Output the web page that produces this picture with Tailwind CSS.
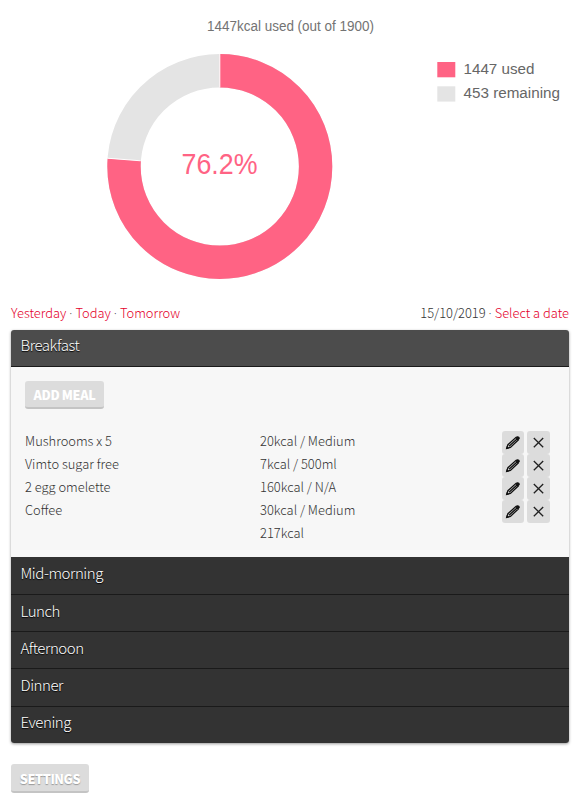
<!DOCTYPE html>
<html lang="en">
<head>
<meta charset="utf-8">
<title>Food diary</title>
<script src="https://cdn.jsdelivr.net/npm/@tailwindcss/browser@4"></script>
</head>
<body class="bg-white">
<svg width="0" height="0" class="absolute">
  <symbol id="pencil" viewBox="0 0 16 16"><path d="M1.7 13.4L2.9 9.7L10.8 2.6L13.3 5.1L5.4 12.4Z M4 11.2L12 3.9" fill="none" stroke="#111" stroke-width="1.3"/><path d="M10.6 2.2L11.9 1.3Q13 .8 14.1 1.8T14.6 4L13.4 5.1ZM1 14.2L1.8 11L4.2 13.2Z" fill="#111"/></symbol>
  <symbol id="cross" viewBox="0 0 16 16"><path d="M2.8 3L12.2 12.2M12.2 3L2.8 12.2" fill="none" stroke="#222" stroke-width="1.3"/></symbol>
</svg>
<main class="h-[803px] w-[585px] overflow-hidden pr-4 pl-[11px] font-['Noto_Sans_CJK_SC','Open_Sans',sans-serif] text-[12.9px] font-light text-[#333]">
  <svg class="-ml-[11px] block h-[300px] w-[585px]" viewBox="0 0 585 300" font-family="Liberation Sans, Arial, sans-serif" font-weight="400">
    <text x="207" y="31" font-size="14" textLength="167" lengthAdjust="spacingAndGlyphs" fill="#737373">1447kcal used (out of 1900)</text>
    <circle cx="219.8" cy="166.5" r="95.8" fill="none" stroke="#e4e4e4" stroke-width="33.4"/>
    <circle cx="219.8" cy="166.5" r="95.8" fill="none" stroke="#ff6384" stroke-width="33.4" pathLength="1900" stroke-dasharray="1447 453" transform="rotate(-90 219.8 166.5)"/>
    <path d="M219.8 54V87.5M107.3 158.2L140.8 160.8" stroke="#fff" stroke-width="1"/>
    <text x="181.5" y="174" font-size="29" textLength="76" lengthAdjust="spacingAndGlyphs" fill="#ff6384">76.2%</text>
    <rect x="437.3" y="62" width="18" height="15.3" fill="#ff6384"/>
    <rect x="437.3" y="86.3" width="18" height="15.3" fill="#e4e4e4"/>
    <text x="463.5" y="74" font-size="15.2" textLength="71" lengthAdjust="spacingAndGlyphs" fill="#666">1447 used</text>
    <text x="463.5" y="98" font-size="15.2" textLength="96.5" lengthAdjust="spacingAndGlyphs" fill="#666">453 remaining</text>
  </svg>
  <nav class="flex h-[30px] justify-between pt-0.5 leading-[22px]">
    <div class="flex h-[22px]"><a class="text-[#e4002b]">Yesterday</a><span class="w-[9px] text-center font-['Open_Sans']">·</span><a class="text-[#e4002b]">Today</a><span class="w-[9px] text-center font-['Open_Sans']">·</span><a class="text-[#e4002b]">Tomorrow</a></div>
    <div class="flex h-[22px]"><span>15/10/2019</span><span class="w-[9px] text-center font-['Open_Sans']">·</span><a class="text-[#e4002b]">Select a date</a></div>
  </nav>
  <section class="h-[413px] overflow-hidden rounded-[3px] bg-[#f7f7f7] shadow-[0_1px_3px_#00000066]">
    <h2 class="h-[37px] border-b border-[#1a1a1a] bg-[#4c4c4c] pl-[9.5px] text-[15px] leading-[30px] tracking-[-0.45px] text-white [text-shadow:0_1px_1px_#000]">Breakfast</h2>
    <div class="h-[190px] px-3.5 pt-3.5">
      <button class="block h-7 w-[79px] rounded-[3px] border-b-2 border-[#c4c4c4] bg-[#dcdcdc] pt-0.5 text-[12.7px] leading-[24px] font-black tracking-[-0.35px] text-white">ADD MEAL</button>
      <div class="mt-[21px] grid grid-cols-[235px_242px_22px_26px] auto-rows-[23px] leading-[22px]">
        <span>Mushrooms x 5</span><span>20kcal / Medium</span><span class="relative top-px flex items-center justify-center rounded-[3px] bg-[#dcdcdc]"><svg class="size-4"><use href="#pencil"/></svg></span><span class="relative top-px ml-[3px] flex items-center justify-center rounded-[3px] bg-[#dcdcdc]"><svg class="size-4"><use href="#cross"/></svg></span>
        <span>Vimto sugar free</span><span>7kcal / 500ml</span><span class="relative top-px flex items-center justify-center rounded-[3px] bg-[#dcdcdc]"><svg class="size-4"><use href="#pencil"/></svg></span><span class="relative top-px ml-[3px] flex items-center justify-center rounded-[3px] bg-[#dcdcdc]"><svg class="size-4"><use href="#cross"/></svg></span>
        <span>2 egg omelette</span><span>160kcal / N/A</span><span class="relative top-px flex items-center justify-center rounded-[3px] bg-[#dcdcdc]"><svg class="size-4"><use href="#pencil"/></svg></span><span class="relative top-px ml-[3px] flex items-center justify-center rounded-[3px] bg-[#dcdcdc]"><svg class="size-4"><use href="#cross"/></svg></span>
        <span>Coffee</span><span>30kcal / Medium</span><span class="relative top-px flex items-center justify-center rounded-[3px] bg-[#dcdcdc]"><svg class="size-4"><use href="#pencil"/></svg></span><span class="relative top-px ml-[3px] flex items-center justify-center rounded-[3px] bg-[#dcdcdc]"><svg class="size-4"><use href="#cross"/></svg></span>
        <span></span><span>217kcal</span>
      </div>
    </div>
    <div class="bg-[#333] text-[15px] leading-[31px] tracking-[-0.45px] text-white [text-shadow:0_1px_1px_#000]">
      <h2 class="h-[38px] border-b border-[#1a1a1a] pl-[9.5px]">Mid-morning</h2>
      <h2 class="h-[37px] border-b border-[#1a1a1a] pl-[9.5px]">Lunch</h2>
      <h2 class="h-[37px] border-b border-[#1a1a1a] pl-[9.5px]">Afternoon</h2>
      <h2 class="h-[38px] border-b border-[#1a1a1a] pl-[9.5px]">Dinner</h2>
      <h2 class="h-9 pl-[9.5px] leading-[30px]">Evening</h2>
    </div>
  </section>
  <button class="mt-[21px] block h-[29px] w-[78px] rounded-[3px] border-b-2 border-[#c4c4c4] bg-[#dcdcdc] pt-0.5 text-[12.7px] leading-[24px] font-black tracking-[-0.45px] text-white [text-shadow:0_1px_1px_#999]">SETTINGS</button>
</main>
</body>
</html>
